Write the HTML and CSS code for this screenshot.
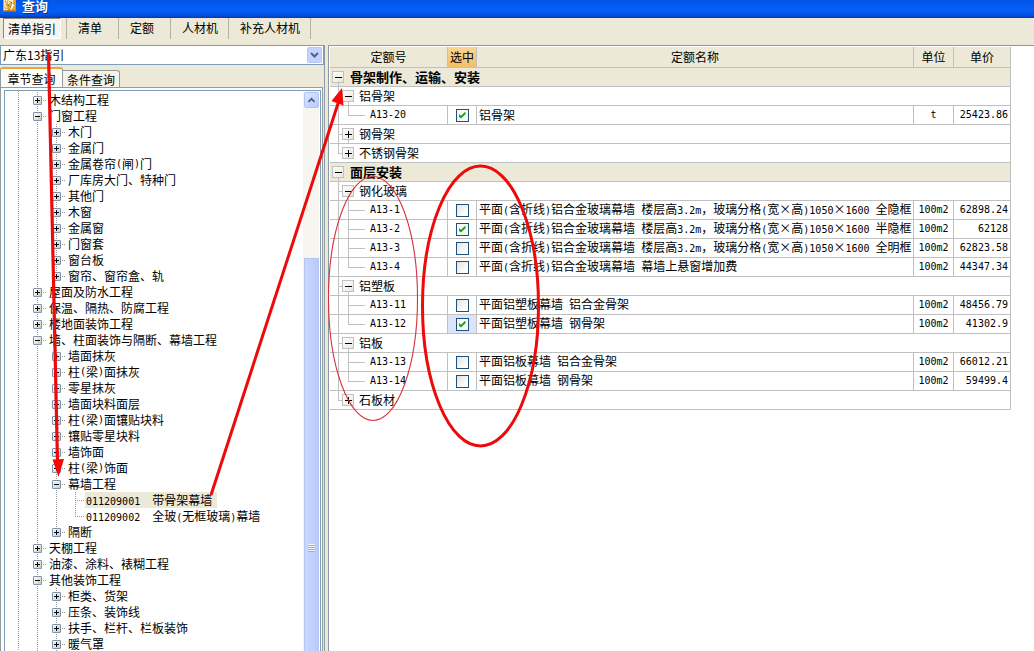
FILE: index.html
```html
<!DOCTYPE html>
<html lang="zh-CN">
<head>
<meta charset="utf-8">
<title>查询</title>
<link rel="stylesheet" href="styles.css">
</head>
<body>
<header class="titlebar">
  <svg class="app-icon" width="15" height="14" viewBox="0 0 15 14" aria-hidden="true">
    <rect width="15" height="14" fill="#e9a21c"/>
    <path d="M1 0h4v3l-2 1v3l2 1v4H1z" fill="#fbe9b0"/>
    <path d="M6 0h6l-1 4 2 2-3 5H6l2-4-2-2z" fill="#fff6d8"/>
    <path d="M7 1l2 2-3 3 3 2-3 4M10 2l-1 5M3 1v2M2 9l2 1" stroke="#a3480a" fill="none"/>
    <path d="M0 13h15" stroke="#7c3a08"/>
  </svg>
  <h1 class="title">查询</h1>
</header>

<nav class="toolbar">
  <button class="tool pressed" type="button">清单指引</button>
  <button class="tool" type="button">清单</button>
  <button class="tool" type="button">定额</button>
  <button class="tool" type="button">人材机</button>
  <button class="tool end" type="button">补充人材机</button>
</nav>

<main class="work">
  <section class="side">
    <div class="combo">
      <select aria-label="指引"><option>广东13指引</option></select>
      <svg class="combo-arrow" width="15" height="16" viewBox="0 0 15 16" aria-hidden="true"><rect x=".5" y=".5" width="14" height="15" rx="1" fill="#c3d3fd" stroke="#b3c7f5"/><path d="M4 6l3.500 3.500L11 6" fill="none" stroke="#4d6185" stroke-width="2"/></svg>
    </div>
    <div class="tabs" role="tablist">
      <button class="tab active" type="button" role="tab" aria-selected="true">章节查询</button>
      <button class="tab" type="button" role="tab" aria-selected="false">条件查询</button>
    </div>
    <div class="tab-page">
      <div class="tree-box">
        <div class="tree-root">
        <ul class="tree">
          <li><div class="row"><button class="exp plus" type="button" aria-label="展开"></button>木结构工程</div></li>
          <li><div class="row"><button class="exp" type="button" aria-label="折叠"></button>门窗工程</div>
            <ul class="tree">
              <li><div class="row"><button class="exp plus" type="button" aria-label="展开"></button>木门</div></li>
              <li><div class="row"><button class="exp plus" type="button" aria-label="展开"></button>金属门</div></li>
              <li><div class="row"><button class="exp plus" type="button" aria-label="展开"></button>金属卷帘<span class="n">(</span>闸<span class="n">)</span>门</div></li>
              <li><div class="row"><button class="exp plus" type="button" aria-label="展开"></button>厂库房大门、特种门</div></li>
              <li><div class="row"><button class="exp plus" type="button" aria-label="展开"></button>其他门</div></li>
              <li><div class="row"><button class="exp plus" type="button" aria-label="展开"></button>木窗</div></li>
              <li><div class="row"><button class="exp plus" type="button" aria-label="展开"></button>金属窗</div></li>
              <li><div class="row"><button class="exp plus" type="button" aria-label="展开"></button>门窗套</div></li>
              <li><div class="row"><button class="exp plus" type="button" aria-label="展开"></button>窗台板</div></li>
              <li class="last"><div class="row"><button class="exp plus" type="button" aria-label="展开"></button>窗帘、窗帘盒、轨</div></li>
            </ul>
          </li>
          <li><div class="row"><button class="exp plus" type="button" aria-label="展开"></button>屋面及防水工程</div></li>
          <li><div class="row"><button class="exp plus" type="button" aria-label="展开"></button>保温、隔热、防腐工程</div></li>
          <li><div class="row"><button class="exp plus" type="button" aria-label="展开"></button>楼地面装饰工程</div></li>
          <li><div class="row"><button class="exp" type="button" aria-label="折叠"></button>墙、柱面装饰与隔断、幕墙工程</div>
            <ul class="tree">
              <li><div class="row"><button class="exp plus" type="button" aria-label="展开"></button>墙面抹灰</div></li>
              <li><div class="row"><button class="exp plus" type="button" aria-label="展开"></button>柱<span class="n">(</span>梁<span class="n">)</span>面抹灰</div></li>
              <li><div class="row"><button class="exp plus" type="button" aria-label="展开"></button>零星抹灰</div></li>
              <li><div class="row"><button class="exp plus" type="button" aria-label="展开"></button>墙面块料面层</div></li>
              <li><div class="row"><button class="exp plus" type="button" aria-label="展开"></button>柱<span class="n">(</span>梁<span class="n">)</span>面镶贴块料</div></li>
              <li><div class="row"><button class="exp plus" type="button" aria-label="展开"></button>镶贴零星块料</div></li>
              <li><div class="row"><button class="exp plus" type="button" aria-label="展开"></button>墙饰面</div></li>
              <li><div class="row"><button class="exp plus" type="button" aria-label="展开"></button>柱<span class="n">(</span>梁<span class="n">)</span>饰面</div></li>
              <li><div class="row"><button class="exp" type="button" aria-label="折叠"></button>幕墙工程</div>
                <ul class="tree">
                  <li><div class="row leaf"><span class="entry selected"><span class="n">011209001  </span>带骨架幕墙</span></div></li>
                  <li class="last"><div class="row leaf"><span class="entry"><span class="n">011209002  </span>全玻<span class="n">(</span>无框玻璃<span class="n">)</span>幕墙</span></div></li>
                </ul>
              </li>
              <li class="last"><div class="row"><button class="exp plus" type="button" aria-label="展开"></button>隔断</div></li>
            </ul>
          </li>
          <li><div class="row"><button class="exp plus" type="button" aria-label="展开"></button>天棚工程</div></li>
          <li><div class="row"><button class="exp plus" type="button" aria-label="展开"></button>油漆、涂料、裱糊工程</div></li>
          <li><div class="row"><button class="exp" type="button" aria-label="折叠"></button>其他装饰工程</div>
            <ul class="tree">
              <li><div class="row"><button class="exp plus" type="button" aria-label="展开"></button>柜类、货架</div></li>
              <li><div class="row"><button class="exp plus" type="button" aria-label="展开"></button>压条、装饰线</div></li>
              <li><div class="row"><button class="exp plus" type="button" aria-label="展开"></button>扶手、栏杆、栏板装饰</div></li>
              <li><div class="row"><button class="exp plus" type="button" aria-label="展开"></button>暖气罩</div></li>
            </ul>
          </li>
        </ul>
        </div>
        <div class="scrollbar">
          <button class="up" type="button" aria-label="向上滚动"><svg width="15" height="15" viewBox="0 0 15 15" aria-hidden="true"><path d="M4 9l3.500-3.500L11 9" fill="none" stroke="#4d6185" stroke-width="2"/></svg></button>
          <div class="track"></div>
          <div class="thumb"><span class="grip"></span></div>
        </div>
      </div>
    </div>
  </section>

  <section class="detail">
    <table class="grid">
      <colgroup><col class="c-code"><col class="c-check"><col><col class="c-unit"><col class="c-price"></colgroup>
      <thead><tr><th>定额号</th><th class="hot">选中</th><th>定额名称</th><th>单位</th><th>单价</th></tr></thead>
      <tbody>
        <tr class="g0"><td colspan="5"><div class="cell"><button class="box" type="button" aria-label="折叠"></button>骨架制作、运输、安装</div></td></tr>
        <tr class="g1"><td colspan="5"><div class="cell"><button class="box" type="button" aria-label="折叠"></button>铝骨架</div></td></tr>
        <tr class="item end"><td>A13-20</td><td><input type="checkbox" aria-label="A13-20" checked></td><td>铝骨架</td><td>t</td><td>25423.86</td></tr>
        <tr class="g1"><td colspan="5"><div class="cell"><button class="box plus" type="button" aria-label="展开"></button>钢骨架</div></td></tr>
        <tr class="g1 end"><td colspan="5"><div class="cell"><button class="box plus" type="button" aria-label="展开"></button>不锈钢骨架</div></td></tr>
        <tr class="g0"><td colspan="5"><div class="cell"><button class="box" type="button" aria-label="折叠"></button>面层安装</div></td></tr>
        <tr class="g1"><td colspan="5"><div class="cell"><button class="box" type="button" aria-label="折叠"></button>钢化玻璃</div></td></tr>
        <tr class="item"><td>A13-1</td><td><input type="checkbox" aria-label="A13-1"></td><td>平面<span class="n">(</span>含折线<span class="n">)</span>铝合金玻璃幕墙<span class="n"> </span>楼层高<span class="n">3.2m</span>，玻璃分格<span class="n">(</span>宽<span class="x">×</span>高<span class="n">)1050</span><span class="x">×</span><span class="n">1600 </span>全隐框</td><td>100m2</td><td>62898.24</td></tr>
        <tr class="item"><td>A13-2</td><td><input type="checkbox" aria-label="A13-2" checked></td><td>平面<span class="n">(</span>含折线<span class="n">)</span>铝合金玻璃幕墙<span class="n"> </span>楼层高<span class="n">3.2m</span>，玻璃分格<span class="n">(</span>宽<span class="x">×</span>高<span class="n">)1050</span><span class="x">×</span><span class="n">1600 </span>半隐框</td><td>100m2</td><td>62128</td></tr>
        <tr class="item"><td>A13-3</td><td><input type="checkbox" aria-label="A13-3"></td><td>平面<span class="n">(</span>含折线<span class="n">)</span>铝合金玻璃幕墙<span class="n"> </span>楼层高<span class="n">3.2m</span>，玻璃分格<span class="n">(</span>宽<span class="x">×</span>高<span class="n">)1050</span><span class="x">×</span><span class="n">1600 </span>全明框</td><td>100m2</td><td>62823.58</td></tr>
        <tr class="item end"><td>A13-4</td><td><input type="checkbox" aria-label="A13-4"></td><td>平面<span class="n">(</span>含折线<span class="n">)</span>铝合金玻璃幕墙<span class="n"> </span>幕墙上悬窗增加费</td><td>100m2</td><td>44347.34</td></tr>
        <tr class="g1"><td colspan="5"><div class="cell"><button class="box" type="button" aria-label="折叠"></button>铝塑板</div></td></tr>
        <tr class="item"><td>A13-11</td><td><input type="checkbox" aria-label="A13-11"></td><td>平面铝塑板幕墙<span class="n"> </span>铝合金骨架</td><td>100m2</td><td>48456.79</td></tr>
        <tr class="item end"><td>A13-12</td><td class="focus"><input type="checkbox" aria-label="A13-12" checked></td><td>平面铝塑板幕墙<span class="n"> </span>钢骨架</td><td>100m2</td><td>41302.9</td></tr>
        <tr class="g1"><td colspan="5"><div class="cell"><button class="box" type="button" aria-label="折叠"></button>铝板</div></td></tr>
        <tr class="item"><td>A13-13</td><td><input type="checkbox" aria-label="A13-13"></td><td>平面铝板幕墙<span class="n"> </span>铝合金骨架</td><td>100m2</td><td>66012.21</td></tr>
        <tr class="item end"><td>A13-14</td><td><input type="checkbox" aria-label="A13-14"></td><td>平面铝板幕墙<span class="n"> </span>钢骨架</td><td>100m2</td><td>59499.4</td></tr>
        <tr class="g1 end"><td colspan="5"><div class="cell"><button class="box plus" type="button" aria-label="展开"></button>石板材</div></td></tr>
      </tbody>
    </table>
  </section>
</main>

<svg class="marks" width="600" height="500" viewBox="0 0 600 500" aria-hidden="true">
  <g fill="none" stroke="#ee0a0a">
    <path d="M48.500 52L57.500 462" stroke-width="3.200"/>
    <path d="M211 495L338.500 102" stroke-width="3"/>
    <ellipse cx="480.500" cy="306" rx="58" ry="140" stroke-width="3"/>
    <ellipse cx="373" cy="298.500" rx="44.500" ry="122" stroke="#d8303a" stroke-width="1.100"/>
  </g>
  <path d="M52.500 459.500L64 459L58.500 477zM342 88L331.500 101L343.500 105.500z" fill="#fa0606"/>
</svg>
</body>
</html>
```

FILE: styles.css
```css
* { box-sizing: border-box; }

body {
  margin: 0;
  height: 100vh;
  display: flex;
  flex-direction: column;
  overflow: hidden;
  position: relative;
  background: #ece9d8;
  color: #000;
  font: 12px/16px "Noto Sans CJK SC", sans-serif;
}

button, select {
  font: inherit;
  color: inherit;
  border: 0;
  padding: 0;
  border-radius: 0;
  background: none;
}

/* Half-width Latin text */
.n {
  font-family: "DejaVu Sans Mono", monospace;
  font-size: 10px;
  white-space: pre;
}

/* Full-width multiplication sign */
.x {
  display: inline-block;
  width: 12px;
  text-align: center;
}

.titlebar {
  flex: none;
  height: 18px;
  display: flex;
  align-items: flex-start;
  gap: 5px;
  padding-left: 2px;
  overflow: hidden;
  background: linear-gradient(#0055e5, #0560f8 60%, #0450e0 85%, #0038b4);
}
.app-icon { flex: none; height: 12px; }
.title {
  margin: 0;
  font-size: 13px;
  line-height: 12px;
  font-weight: bold;
  color: #fff;
  text-shadow: 1px 1px #0a2f8c;
}

.toolbar {
  flex: none;
  display: flex;
  height: 27px;
  padding: 0 3px 6px;
}
.tool {
  min-width: 52px;
  padding: 0 10px 2px 11px;
  text-align: left;
  border-left: 1px solid #b5b2a2;
  white-space: nowrap;
}
.tool.end { border-right: 1px solid #b5b2a2; }
.tool.pressed {
  padding: 0 4px;
  margin-right: 5px;
  border: 1px solid #fff;
  border-top-color: #8a877a;
  border-left-color: #8a877a;
  background: #f6f4ec;
}

.work {
  flex: 1;
  min-height: 0;
  display: flex;
  gap: 3px;
}

.side {
  flex: none;
  width: 325px;
  display: flex;
  flex-direction: column;
  border-right: 1px solid #8c9aa8;
}
.combo {
  flex: none;
  height: 20px;
  display: flex;
  align-items: center;
  padding-right: 1px;
  border: 1px solid #7f9db9;
  background: #fff;
}
.combo select {
  flex: 1;
  height: 18px;
  padding-left: 2px;
  appearance: none;
}
.combo-arrow { flex: none; }

.tabs {
  flex: none;
  height: 20px;
  margin-top: 2px;
  display: flex;
  align-items: flex-end;
}
.tab {
  height: 17px;
  width: 57px;
  line-height: 15px;
  border: 1px solid #919b9c;
  border-left: 0;
  border-bottom: 0;
  border-radius: 0 3px 0 0;
  background: #f4f3ea;
}
.tab.active {
  height: 20px;
  width: 63px;
  border-top: 2px solid #f0a530;
  border-left: 1px solid #919b9c;
  border-radius: 3px 3px 0 0;
  background: #fcfcfa;
}
.tab-page {
  flex: 1;
  min-height: 0;
  display: flex;
  margin-right: 1px;
  padding: 2px 1px 0 3px;
  border: 1px solid #919b9c;
  border-bottom: 0;
  background: #fcfcfa;
}
.tree-box {
  flex: 1;
  min-width: 0;
  display: flex;
  padding: 0 1px;
  border: 1px solid #7f9db9;
  border-bottom: 0;
  background: #fff;
  overflow: hidden;
}
.tree-root {
  flex: 1;
  min-width: 0;
  padding: 1px 0 0 27px;
  background: repeating-linear-gradient(#999 0 1px, transparent 1px 2px) 12px 0 / 1px 100% no-repeat;
}
.tree { list-style: none; margin: 0; padding: 0; }
.tree .tree { margin-left: 19px; }
.tree li {
  background: repeating-linear-gradient(#999 0 1px, transparent 1px 2px) 4px 0 / 1px 100% no-repeat;
}
.tree li.last { background-size: 1px 8px; }
.row {
  height: 16px;
  display: flex;
  align-items: center;
  white-space: nowrap;
  background: repeating-linear-gradient(90deg, #999 0 1px, transparent 1px 2px) 4px 8px / 10px 1px no-repeat;
}
.row .n { line-height: 16px; }
.exp {
  flex: none;
  width: 9px;
  height: 9px;
  margin-right: 7px;
  border: 1px solid #7d93ad;
  border-radius: 1px;
  background:
    linear-gradient(#000, #000) center / 5px 1px no-repeat,
    linear-gradient(135deg, #fff, #d0cbbd);
}
.exp.plus {
  background:
    linear-gradient(#000, #000) center / 5px 1px no-repeat,
    linear-gradient(#000, #000) center / 1px 5px no-repeat,
    linear-gradient(135deg, #fff, #d0cbbd);
}
.leaf { padding-left: 14px; }
.entry { height: 16px; padding: 0 5px 0 1px; }
.entry.selected { background: #ece9d8; }

.scrollbar {
  flex: none;
  width: 16px;
  padding: 1px 0 0 1px;
  display: flex;
  flex-direction: column;
  background: #f6f5f0;
}
.up {
  flex: none;
  height: 16px;
  border: 1px solid #b0c4f2;
  border-radius: 2px;
  background: linear-gradient(135deg, #dce6ff, #b8cbf8);
  display: flex;
  justify-content: center;
  align-items: center;
}
.track { flex: 150; }
.thumb {
  flex: 393;
  display: flex;
  justify-content: center;
  border: 1px solid #b3c5f4;
  border-bottom: 0;
  background: linear-gradient(90deg, #cad8fe, #b9cafa);
}
.grip {
  width: 7px;
  height: 8px;
  margin-top: 285px;
  background: repeating-linear-gradient(#eef4fe 0 1px, #8cb0f8 1px 2px);
}

.detail {
  flex: 1;
  min-width: 0;
  padding: 1px 23px 0 1px;
  border-top: 1px solid #8c9aa8;
  border-left: 1px solid #8c9aa8;
  background: #fff;
}
.grid {
  width: 100%;
  table-layout: fixed;
  border-collapse: separate;
  border-spacing: 0;
}
.c-code { width: 118px; }
.c-check { width: 29px; }
.c-unit { width: 40px; }
.c-price { width: 57px; }
.grid th, .grid td {
  height: 19px;
  padding: 0;
  line-height: 16px;
  font-weight: normal;
  white-space: nowrap;
  border-right: 1px solid #c0c0c0;
  border-bottom: 1px solid #c0c0c0;
}
.grid th { height: 21px; background: #ece9d8; }
.grid th.hot { background: linear-gradient(#f9d596, #f3bf66); }

.cell { display: flex; align-items: center; height: 18px; }
.g0 td {
  font-weight: bold;
  font-size: 13px;
  background: linear-gradient(#c0c0c0, #c0c0c0) 8px 12px / 1px 6px no-repeat #ece9d8;
}
.g0 .cell { padding-left: 2px; gap: 6px; }
.g1 td {
  background:
    linear-gradient(#c0c0c0, #c0c0c0) 8px 0 / 1px 100% no-repeat,
    linear-gradient(#c0c0c0, #c0c0c0) 8px 9px / 5px 1px no-repeat,
    linear-gradient(#c0c0c0, #c0c0c0) 18px 12px / 1px 6px no-repeat;
}
.g1.end td {
  background:
    linear-gradient(#c0c0c0, #c0c0c0) 8px 0 / 1px 9px no-repeat,
    linear-gradient(#c0c0c0, #c0c0c0) 8px 9px / 5px 1px no-repeat;
}
.g1 .cell { padding-left: 12px; gap: 5px; }

.box {
  flex: none;
  width: 12px;
  height: 12px;
  border: 1px solid #c0c0c0;
  background:
    linear-gradient(#000, #000) 2px 5px / 7px 1px no-repeat,
    linear-gradient(135deg, #fff, #e8e6dc);
}
.box.plus {
  background:
    linear-gradient(#000, #000) 2px 5px / 7px 1px no-repeat,
    linear-gradient(#000, #000) 5px 2px / 1px 7px no-repeat,
    linear-gradient(135deg, #fff, #e8e6dc);
}

tr.item td { font-family: "DejaVu Sans Mono", monospace; font-size: 10px; }
tr.item td:nth-child(1) {
  padding-left: 40px;
  background:
    linear-gradient(#c0c0c0, #c0c0c0) 8px 0 / 1px 100% no-repeat,
    linear-gradient(#c0c0c0, #c0c0c0) 18px 0 / 1px 100% no-repeat,
    linear-gradient(#c0c0c0, #c0c0c0) 18px 9px / 17px 1px no-repeat;
}
tr.item.end td:nth-child(1) { background-size: 1px 100%, 1px 9px, 17px 1px; }
tr.item td:nth-child(2) { text-align: center; }
tr.item td:nth-child(3) {
  padding-left: 2px;
  font-family: "Noto Sans CJK SC", sans-serif;
  font-size: 12px;
}
tr.item td:nth-child(4) { text-align: center; }
tr.item td:nth-child(5) { padding-right: 2px; text-align: right; }
tr.item td.focus { background: #dbe4f8; }

.grid input {
  appearance: none;
  display: block;
  width: 13px;
  height: 13px;
  margin: 0 auto;
  border: 1px solid #1c5180;
  background: linear-gradient(135deg, #e2e2dc, #fff 80%);
}
.grid input:checked { background: #f6f8f4; }
.grid input:checked::before {
  content: "";
  display: block;
  width: 7px;
  height: 7px;
  margin: 2px;
  background: #21a121;
  clip-path: polygon(0 29%, 35% 60%, 100% 0, 100% 40%, 35% 100%, 0 70%);
}

.marks {
  position: absolute;
  left: 0;
  top: 0;
  pointer-events: none;
}
```
